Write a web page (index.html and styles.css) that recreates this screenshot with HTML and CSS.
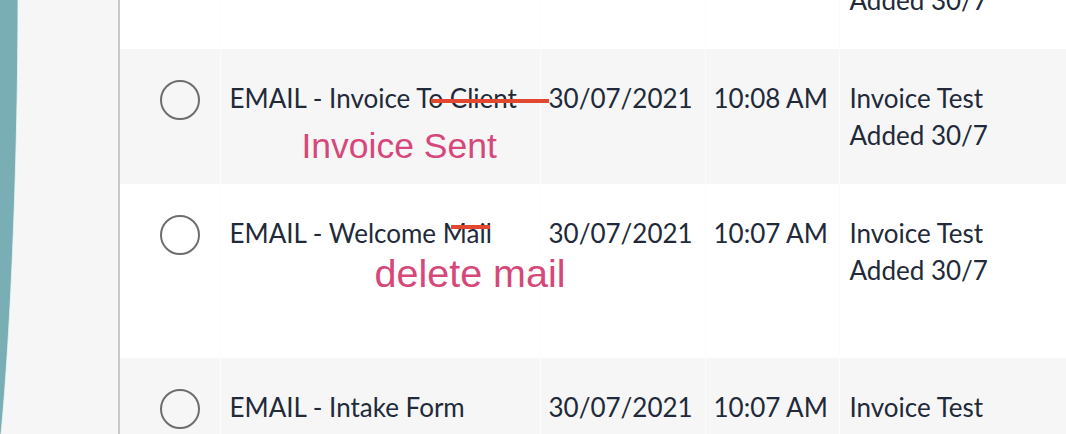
FILE: index.html
```html
<!DOCTYPE html>
<html lang="en">
<head>
    <meta charset="UTF-8">
    <meta name="viewport" content="width=device-width, initial-scale=1.0">
    <title>Automations</title>
    <link rel="stylesheet" href="styles.css">
</head>
<body>
    <div class="app">
        <!-- Side Panel -->
        <div class="side-panel">
            <svg class="side-curve" viewBox="0 0 20 434" preserveAspectRatio="none" aria-hidden="true">
                <path d="M0 0 L18 0 C18 150 11 330 1 434 L0 434 Z" fill="#79aeb4"/>
                <path d="M18 0 C18 150 11 330 1 434" fill="none" stroke="#eef5f6" stroke-width="0.8"/>
            </svg>
        </div>

        <!-- Email List -->
        <div class="main">
            <table class="email-list">
                <colgroup>
                    <col class="col-check">
                    <col class="col-name">
                    <col class="col-date">
                    <col class="col-time">
                    <col class="col-desc">
                </colgroup>
                <tbody>
                    <!-- row scrolled mostly out of view -->
                    <tr>
                        <td></td>
                        <td></td>
                        <td></td>
                        <td></td>
                        <td>Invoice Test Added 30/7</td>
                    </tr>
                    <tr class="shaded">
                        <td><span class="check"></span></td>
                        <td class="name">
                            EMAIL - Invoice To Client
                            <span class="strike strike-invoice"></span>
                            <span class="note note-invoice">Invoice Sent</span>
                        </td>
                        <td class="stamp">30/07/2021</td>
                        <td class="stamp">10:08 AM</td>
                        <td>Invoice Test Added 30/7</td>
                    </tr>
                    <tr class="tall">
                        <td><span class="check"></span></td>
                        <td class="name">
                            EMAIL - Welcome Mail
                            <span class="strike strike-welcome"></span>
                            <span class="note note-welcome">delete mail</span>
                        </td>
                        <td class="stamp">30/07/2021</td>
                        <td class="stamp">10:07 AM</td>
                        <td>Invoice Test Added 30/7</td>
                    </tr>
                    <tr class="shaded">
                        <td><span class="check"></span></td>
                        <td>EMAIL - Intake Form</td>
                        <td class="stamp">30/07/2021</td>
                        <td class="stamp">10:07 AM</td>
                        <td>Invoice Test Added 30/7</td>
                    </tr>
                </tbody>
            </table>
        </div>
    </div>
</body>
</html>
```

FILE: styles.css
```css
/* Basic Reset */
* {
    box-sizing: border-box;
    margin: 0;
    padding: 0;
}

body {
    font-family: Lato, "Liberation Sans", sans-serif;
    color: #222a39;
    background: #ffffff;
    overflow: hidden;
}

.app {
    display: flex;
    height: 100vh;
    overflow: hidden;
}

/* Side Panel */
.side-panel {
    position: relative;
    width: 120px;
    flex-shrink: 0;
    background-color: #f6f6f6;
    border-right: 2px solid #c9c9c9;
}

.side-curve {
    position: absolute;
    top: 0;
    left: 0;
    width: 20px;
    height: 100%;
}

/* Email List */
.main {
    flex: 1;
    overflow: hidden;
}

.email-list {
    width: 946px;
    margin-top: -86px; /* list is scrolled */
    border-collapse: collapse;
    table-layout: fixed;
    font-size: 26px;
    line-height: 37px;
}

.col-check { width: 100px; }
.col-name { width: 320px; }
.col-date { width: 165px; }
.col-time { width: 134px; }
.col-desc { width: 227px; }

.email-list td {
    vertical-align: top;
    padding: 31px 10px 30px 9px;
    border-right: 1px solid #fcfcfc;
}

.email-list td.stamp {
    white-space: nowrap;
    padding-left: 8px;
    padding-right: 0;
}

.email-list td:first-child {
    padding-left: 40px;
}

.email-list td:last-child {
    border-right: none;
    padding-left: 10px;
    padding-right: 14px;
}

.email-list tr.shaded td {
    background-color: #f6f6f6;
}

.email-list tr.tall td {
    padding-bottom: 69px;
}

.check {
    display: block;
    width: 40px;
    height: 40px;
    border: 2px solid #6e6e6e;
    border-radius: 50%;
}

/* Review notes drawn over the list */
.name {
    position: relative;
}

.strike {
    position: absolute;
    height: 4px;
    background-color: #e2472f;
}

.strike-invoice {
    left: 210px;
    top: 50px;
    width: 118px;
}

.strike-welcome {
    left: 230px;
    top: 41px;
    width: 39px;
}

.note {
    position: absolute;
    font-family: "Liberation Sans", Arial, sans-serif;
    line-height: 1;
    color: #d6487a;
    white-space: nowrap;
}

.note-invoice {
    left: 81px;
    top: 80px;
    font-size: 35.5px;
}

.note-welcome {
    left: 154px;
    top: 70px;
    font-size: 39.5px;
}
```
